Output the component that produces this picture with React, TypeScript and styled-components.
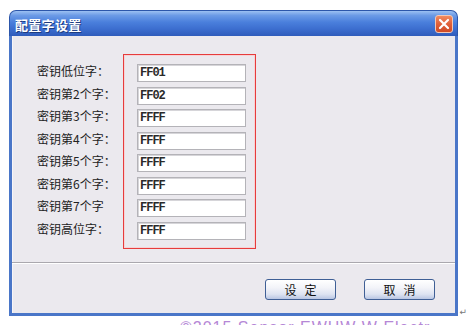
import React from "react";
import styled, { createGlobalStyle } from "styled-components";

const Global = createGlobalStyle`
  html, body { margin: 0; padding: 0; background: #fff; overflow: hidden; }
  body { width: 467px; height: 325px; }
`;

const Page = styled.div`
  width: 467px;
  height: 325px;
  padding: 10px 0 0 9px;
  box-sizing: border-box;
  display: flex;
  flex-direction: column;
  overflow: hidden;
`;

const Window = styled.div`
  width: 449px;
  height: 306px;
  flex-shrink: 0;
  display: flex;
  flex-direction: column;
  box-sizing: border-box;
  position: relative;
`;

const TitleBar = styled.div`
  height: 26px;
  flex-shrink: 0;
  border-radius: 7px 7px 0 0;
  background: linear-gradient(
    to bottom,
    #9cc0f2 0%,
    #6b9ae6 18%,
    #4a7fdc 45%,
    #3d6fd0 70%,
    #2f5cbb 100%
  );
  border: 1px solid #2c56aa;
  border-bottom: none;
  box-sizing: border-box;
  display: flex;
  align-items: center;
  justify-content: space-between;
  padding: 0 4px 0 5px;
`;

const Title = styled.span`
  font-family: "Noto Sans CJK SC", sans-serif;
  font-weight: 700;
  font-size: 13px;
  color: #fff;
  letter-spacing: 0.3px;
  text-shadow: 1px 1px 0 #1d3c80;
  margin-top: 1px;
`;

const CloseButton = styled.div`
  width: 18px;
  height: 18px;
  box-sizing: border-box;
  border: 1px solid #f3c7b4;
  border-radius: 3px;
  background: linear-gradient(to bottom, #f08a60 0%, #e0603a 50%, #cf4a26 100%);
  display: flex;
  align-items: center;
  justify-content: center;
  margin-top: 1px;
`;

const Frame = styled.div`
  flex: 1;
  display: flex;
  flex-direction: column;
  background: #ebe9ee;
  border: 3px solid #4a76c8;
  border-top: none;
  box-shadow: inset 1px 0 0 #f6f5f8;
`;

const Main = styled.div`
  height: 226px;
  flex-shrink: 0;
  box-sizing: border-box;
  display: flex;
  padding: 18px 0 0 25px;
`;

const LabelColumn = styled.div`
  display: flex;
  flex-direction: column;
  width: 86px;
  padding-top: 6px;
`;

const Label = styled.div`
  height: 22.5px;
  line-height: 22.5px;
  font-family: "Noto Sans CJK SC", sans-serif;
  font-size: 12px;
  color: #222;
  white-space: nowrap;
`;

const RedBox = styled.div`
  width: 133px;
  height: 195px;
  box-sizing: border-box;
  border: 1px solid #e63c3c;
  box-shadow: inset 0 0 0 1px #f6d3d6;
  padding: 9px 0 0 13px;
  display: flex;
  flex-direction: column;
  gap: 4.5px;
`;

const Field = styled.div`
  width: 109px;
  height: 18px;
  box-sizing: border-box;
  background: #fff;
  border: 1px solid #b4b3b8;
  box-shadow: inset 1px 1px 0 #d6d5d9;
  font-family: "Liberation Mono", monospace;
  font-weight: 700;
  font-size: 12px;
  line-height: 16px;
  color: #2a2a2a;
  padding-left: 2px;
  letter-spacing: -1px;
`;

const Separator = styled.div`
  height: 2px;
  flex-shrink: 0;
  border-top: 1px solid #aaa8ae;
  background: #fff;
  box-sizing: border-box;
`;

const Footer = styled.div`
  flex: 1;
  display: flex;
  justify-content: flex-end;
  align-items: flex-start;
  gap: 28px;
  padding: 15px 20px 0 0;
`;

const Button = styled.div`
  width: 71px;
  height: 21px;
  box-sizing: border-box;
  border: 1px solid #3f5f95;
  border-radius: 3px;
  background: linear-gradient(to bottom, #ffffff 0%, #f3f4f9 40%, #dde3f1 75%, #b9c6e3 100%);
  display: flex;
  align-items: center;
  justify-content: center;
  font-family: "Noto Sans CJK SC", sans-serif;
  font-size: 12px;
  color: #111;
  letter-spacing: 8px;
  text-indent: 8px;
`;

const ReturnMark = styled.span`
  position: absolute;
  right: -9px;
  bottom: -1px;
  font-family: "DejaVu Sans", sans-serif;
  font-size: 9px;
  color: #777;
`;

const Caption = styled.div`
  flex-shrink: 0;
  margin-top: 3px;
  padding-left: 171px;
  font-family: "Liberation Sans", sans-serif;
  font-size: 16px;
  line-height: 18px;
  color: #b587d6;
  white-space: nowrap;
  letter-spacing: 1px;
`;

const labels = [
  "密钥低位字：",
  "密钥第2个字：",
  "密钥第3个字：",
  "密钥第4个字：",
  "密钥第5个字：",
  "密钥第6个字：",
  "密钥第7个字",
  "密钥高位字：",
];

const values = ["FF01", "FF02", "FFFF", "FFFF", "FFFF", "FFFF", "FFFF", "FFFF"];

export default function App() {
  return (
    <>
      <Global />
      <Page>
        <Window>
          <TitleBar>
            <Title>配置字设置</Title>
            <CloseButton>
              <svg width="12" height="12" viewBox="0 0 12 12">
                <path d="M2 2 L10 10 M10 2 L2 10" stroke="#fff" strokeWidth="2.2" strokeLinecap="round" />
              </svg>
            </CloseButton>
          </TitleBar>
          <Frame>
            <Main>
              <LabelColumn>
                {labels.map((l) => (
                  <Label key={l}>{l}</Label>
                ))}
              </LabelColumn>
              <RedBox>
                {values.map((v, i) => (
                  <Field key={i}>{v}</Field>
                ))}
              </RedBox>
            </Main>
            <Separator />
            <Footer>
              <Button>设定</Button>
              <Button>取消</Button>
            </Footer>
          </Frame>
          <ReturnMark>↵</ReturnMark>
        </Window>
        <Caption>©2015 Sensor   EWHW W Electr</Caption>
      </Page>
    </>
  );
}
